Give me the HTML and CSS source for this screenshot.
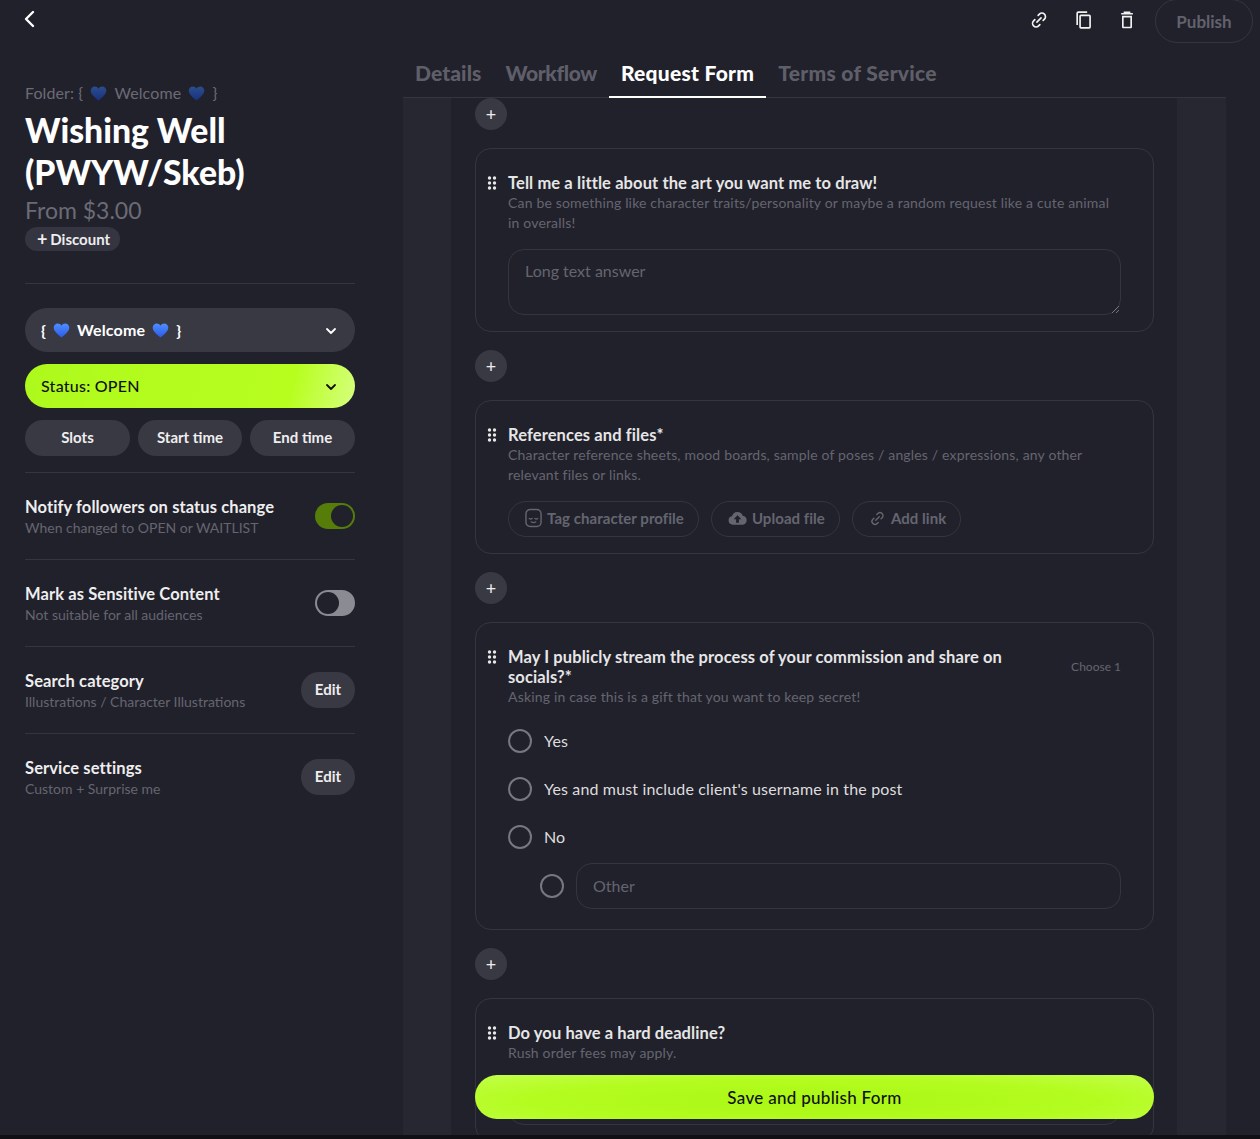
FILE: index.html
```html
<!DOCTYPE html>
<html lang="en">
<head>
  <meta charset="UTF-8" />
  <meta name="viewport" content="width=device-width, initial-scale=1.0" />
  <title>Wishing Well - Request Form</title>
  <link rel="stylesheet" href="styles.css">
</head>
<body>
  <svg class="defs" width="0" height="0">
    <defs>
      <linearGradient id="heartFill" x1="0" y1="0" x2="0" y2="1">
        <stop offset="0" stop-color="#4f8dff" />
        <stop offset="1" stop-color="#2b5be8" />
      </linearGradient>
      <symbol id="heart" viewBox="0 0 24 24">
        <path fill="url(#heartFill)" d="M12 22C6 17 1 13 1 7.8 1 4.4 3.600 2 6.700 2 8.900 2 11 3.200 12 5.200 13 3.200 15.100 2 17.300 2 20.400 2 23 4.400 23 7.800 23 13 18 17 12 22Z" />
      </symbol>
      <symbol id="chev" viewBox="0 0 12 12">
        <path d="M2 4l4 4 4-4" fill="none" stroke="currentColor" stroke-width="1.800" stroke-linecap="round" stroke-linejoin="round" />
      </symbol>
      <symbol id="clip" viewBox="0 0 24 24">
        <path d="M9.500 14.500l5-5M11 6.500l1.500-1.500a4.240 4.240 0 0 1 6 6L17 12.500M13 17.500L11.500 19a4.240 4.240 0 0 1-6-6L7 11.500" fill="none" stroke="currentColor" stroke-width="2" stroke-linecap="round" />
      </symbol>
      <symbol id="dots" viewBox="0 0 10 14">
        <g fill="currentColor">
          <circle cx="2.500" cy="2" r="1.700" /><circle cx="7.500" cy="2" r="1.700" />
          <circle cx="2.500" cy="7" r="1.700" /><circle cx="7.500" cy="7" r="1.700" />
          <circle cx="2.500" cy="12" r="1.700" /><circle cx="7.500" cy="12" r="1.700" />
        </g>
      </symbol>
    </defs>
  </svg>

  <div class="app">
    <aside class="sidebar">
      <a class="back" href="#">
        <svg width="20" height="20" viewBox="0 0 20 20"><path d="M13 3l-7 7 7 7" fill="none" stroke="currentColor" stroke-width="2.400" stroke-linecap="round" stroke-linejoin="round" /></svg>
      </a>

      <div class="folder">Folder: { <svg class="heart"><use href="#heart" /></svg> Welcome <svg class="heart"><use href="#heart" /></svg> }</div>
      <h1>Wishing Well (PWYW/Skeb)</h1>
      <div class="price">From $3.00</div>
      <button class="discount"><span class="plus">+</span>Discount</button>

      <hr class="rule rule-top" />

      <div class="select select-folder">
        <span>{ <svg class="heart"><use href="#heart" /></svg> Welcome <svg class="heart"><use href="#heart" /></svg> }</span>
        <svg class="chev"><use href="#chev" /></svg>
      </div>
      <div class="select select-status">
        <span>Status: OPEN</span>
        <svg class="chev"><use href="#chev" /></svg>
      </div>
      <div class="time-btns">
        <button class="slots">Slots</button>
        <button class="start">Start time</button>
        <button class="end">End time</button>
      </div>

      <hr class="rule rule-mid" />

      <div class="setting">
        <div class="setting-text">
          <div class="setting-title">Notify followers on status change</div>
          <div class="setting-sub">When changed to OPEN or WAITLIST</div>
        </div>
        <span class="toggle on"></span>
      </div>
      <hr class="rule" />
      <div class="setting">
        <div class="setting-text">
          <div class="setting-title">Mark as Sensitive Content</div>
          <div class="setting-sub">Not suitable for all audiences</div>
        </div>
        <span class="toggle"></span>
      </div>
      <hr class="rule" />
      <div class="setting">
        <div class="setting-text">
          <div class="setting-title">Search category</div>
          <div class="setting-sub">Illustrations / Character Illustrations</div>
        </div>
        <button class="edit">Edit</button>
      </div>
      <hr class="rule" />
      <div class="setting">
        <div class="setting-text">
          <div class="setting-title">Service settings</div>
          <div class="setting-sub">Custom + Surprise me</div>
        </div>
        <button class="edit">Edit</button>
      </div>
    </aside>

    <div class="content">
      <div class="topbar">
        <svg class="top-icon"><use href="#clip" /></svg>
        <svg class="top-icon" viewBox="0 0 24 24"><path d="M5 18V4a1.500 1.500 0 0 1 1.500-1.500H17M9.500 6.500h10a1 1 0 0 1 1 1v13a1 1 0 0 1-1 1h-10a1 1 0 0 1-1-1v-13a1 1 0 0 1 1-1z" fill="none" stroke="currentColor" stroke-width="2" /></svg>
        <svg class="top-icon" viewBox="0 0 24 24"><path d="M5 4.500h14M9 4V2.800h6V4M7 8h10v12.500a.5.5 0 0 1-.5.5h-9a.5.5 0 0 1-.5-.5z" fill="none" stroke="currentColor" stroke-width="2" /></svg>
        <button class="publish">Publish</button>
      </div>

      <nav class="tabs">
        <a href="#">Details</a>
        <a href="#" class="tab-tight">Workflow</a>
        <a href="#" class="active">Request Form</a>
        <a href="#" class="tab-wide">Terms of Service</a>
      </nav>

      <div class="form-scroll">
        <main class="form-col">
          <button class="add add-first">+</button>

          <section class="card">
            <svg class="grip"><use href="#dots" /></svg>
            <h3>Tell me a little about the art you want me to draw!</h3>
            <p class="desc">Can be something like character traits/personality or maybe a random request like a cute animal in overalls!</p>
            <div class="long-answer">Long text answer
              <svg class="resizer" width="10" height="10" viewBox="0 0 10 10"><path d="M9 2L2 9M9 6L6 9" stroke="#77777f" stroke-width="1" fill="none" /></svg>
            </div>
          </section>

          <button class="add">+</button>

          <section class="card">
            <svg class="grip"><use href="#dots" /></svg>
            <h3>References and files*</h3>
            <p class="desc">Character reference sheets, mood boards, sample of poses / angles / expressions, any other relevant files or links.</p>
            <div class="file-btns">
              <button class="file-btn">
                <svg width="17" height="20" viewBox="0 0 18 20"><rect x="1" y="1" width="16" height="18" rx="4.500" fill="none" stroke="currentColor" stroke-width="1.500" /><path d="M4.500 10.500c1 .9 2 .9 3 0M10.500 10.500c1 .9 2 .9 3 0M6.500 14c1.600 1.200 3.400 1.200 5 0" fill="none" stroke="currentColor" stroke-width="1.300" stroke-linecap="round" /></svg>
                Tag character profile
              </button>
              <button class="file-btn">
                <svg width="19" height="14" viewBox="0 0 20 14"><path fill="currentColor" d="M5 14a4.500 4.500 0 0 1-.8-8.900A6 6 0 0 1 15.500 4.500 4.800 4.800 0 0 1 15.500 14z" /><path fill="#21212c" d="M10 4l4 4.200h-2.500V12h-3V8.200H6z" /></svg>
                Upload file
              </button>
              <button class="file-btn">
                <svg class="link-icon"><use href="#clip" /></svg>
                Add link
              </button>
            </div>
          </section>

          <button class="add">+</button>

          <section class="card card-choice">
            <svg class="grip"><use href="#dots" /></svg>
            <div class="title-row">
              <h3>May I publicly stream the process of your commission and share on socials?*</h3>
              <span class="choose">Choose 1</span>
            </div>
            <p class="desc">Asking in case this is a gift that you want to keep secret!</p>
            <div class="options">
              <label class="option"><span class="radio"></span>Yes</label>
              <label class="option"><span class="radio"></span>Yes and must include client's username in the post</label>
              <label class="option"><span class="radio"></span>No</label>
              <div class="option-other">
                <span class="radio"></span>
                <div class="other-input">Other</div>
              </div>
            </div>
          </section>

          <button class="add">+</button>

          <section class="card">
            <svg class="grip"><use href="#dots" /></svg>
            <h3>Do you have a hard deadline?</h3>
            <p class="desc">Rush order fees may apply.</p>
            <div class="date-field"></div>
          </section>
        </main>
        <button class="save">Save and publish Form</button>
      </div>
    </div>
  </div>
</body>
</html>
```

FILE: styles.css
```css
* {
  box-sizing: border-box;
}
html, body {
  height: 100%;
}
body {
  margin: 0;
  background: #0f0f14;
  color: #fff;
  font-family: "Lato", "Liberation Sans", sans-serif;
  overflow: hidden;
}
button {
  font-family: inherit;
  border: none;
  cursor: pointer;
}
.defs {
  position: absolute;
}
.app {
  height: 1135px;
  background: #21212c;
  display: grid;
  grid-template-columns: 403px 1fr;
  overflow: hidden;
}

/* Left column */
.sidebar {
  padding: 9px 48px 0 25px;
}
.back {
  display: block;
  height: 20px;
  margin-left: -5px;
  color: #fff;
}
.folder {
  margin-top: 54px;
  height: 20px;
  font-size: 16px;
  letter-spacing: 0.1px;
  line-height: 20px;
  color: #6b6b75;
}
.heart {
  width: 17px;
  height: 17px;
  vertical-align: -3px;
  margin: 0 3px;
}
.folder .heart {
  filter: brightness(0.55);
}
h1 {
  margin: 6px 0 0;
  font-size: 33.7px;
  line-height: 42px;
  font-weight: 900;
  color: #fff;
}
.price {
  margin-top: 1px;
  font-size: 23px;
  line-height: 32px;
  color: #6b6b75;
}
.discount {
  display: flex;
  align-items: center;
  justify-content: center;
  height: 24px;
  width: 95px;
  margin-top: 1px;
  padding: 0 0 0 2px;
  border-radius: 12px;
  background: #353541;
  color: #eee;
  font-size: 15px;
  font-weight: 700;
}
.discount .plus {
  font-size: 18px;
  margin-right: 3px;
}
.rule {
  border: none;
  border-top: 1px solid #35353f;
  margin: 0;
}
.rule-top {
  margin-top: 32px;
}
.rule-mid {
  margin-top: 16px;
}
.select {
  height: 44px;
  border-radius: 22px;
  padding: 0 18px 2px 16px;
  display: flex;
  align-items: center;
  justify-content: space-between;
  font-size: 16px;
  letter-spacing: 0.15px;
}
.select-folder {
  margin-top: 24px;
  background: #393944;
  font-weight: 700;
}
.select-status {
  margin-top: 12px;
  background: linear-gradient(105deg, #aef91c 0%, #b7fe1f 80%, #d6ff7e 100%);
  color: #111;
  font-weight: 500;
  letter-spacing: 0.25px;
}
.chev {
  width: 12px;
  height: 12px;
  margin-top: 3px;
}
.time-btns {
  margin-top: 12px;
  display: flex;
  gap: 8px;
}
.time-btns button {
  height: 36px;
  padding: 0 0 2px;
  border-radius: 18px;
  background: #393944;
  color: #eee;
  font-size: 15px;
  font-weight: 700;
}
.slots { width: 105px; }
.start { width: 104px; }
.end { width: 105px; }
.setting {
  height: 86px;
  display: flex;
  align-items: center;
  justify-content: space-between;
}
.setting-text {
  padding-top: 2px;
}
.setting-title {
  font-size: 16.5px;
  letter-spacing: 0.1px;
  line-height: 22px;
  font-weight: 700;
  color: #eee;
}
.setting-sub {
  font-size: 14px;
  line-height: 20px;
  color: #65656f;
}
.toggle {
  width: 40px;
  height: 26px;
  border-radius: 13px;
  background: #8b8b93;
  padding: 2px;
  display: flex;
}
.toggle::after {
  content: "";
  width: 22px;
  height: 22px;
  border-radius: 50%;
  background: #21212c;
}
.toggle.on {
  background: #567c09;
  justify-content: flex-end;
}
.edit {
  width: 54px;
  height: 36px;
  padding: 0 0 2px;
  border-radius: 18px;
  background: #393944;
  color: #eee;
  font-size: 15px;
  font-weight: 700;
}

/* Right column */
.content {
  min-width: 0;
  display: flex;
  flex-direction: column;
  height: 1135px;
}
.topbar {
  flex: none;
  height: 44px;
  margin-top: -1px;
  padding-right: 7px;
  display: flex;
  justify-content: flex-end;
  align-items: center;
}
.top-icon {
  width: 20px;
  height: 20px;
  color: #f2f2f2;
  margin-right: 24px;
  margin-bottom: 2px;
}
.publish {
  width: 98px;
  height: 44px;
  border-radius: 22px;
  background: transparent;
  border: 1px solid #35353f;
  color: #62626c;
  font-size: 17px;
  font-weight: 700;
  margin-left: -6px;
}
.tabs {
  flex: none;
  height: 55px;
  width: 823px;
  display: flex;
  align-items: flex-end;
  border-bottom: 1px solid #35353f;
}
.tabs a {
  height: 55px;
  padding: 6px 12px 0;
  display: flex;
  align-items: center;
  font-size: 21px;
  letter-spacing: 0.1px;
  font-weight: 900;
  color: #5f5f69;
  text-decoration: none;
}
.tabs a.tab-tight {
  letter-spacing: -0.35px;
}
.tabs a.tab-wide {
  letter-spacing: 0.3px;
}
.tabs a.active {
  color: #fff;
  letter-spacing: 0.25px;
  border-bottom: 2px solid #fff;
  margin-bottom: -1px;
}
.form-scroll {
  position: relative;
  flex: 1;
  width: 823px;
  background: #272732;
  overflow: hidden;
}
.form-col {
  width: 726px;
  height: 100%;
  margin-left: 48px;
  padding: 0 23px 0 24px;
  background: #21212c;
  overflow: hidden;
}
.add {
  display: block;
  width: 32px;
  height: 32px;
  padding: 0;
  margin: 18px 0;
  border-radius: 50%;
  background: #393944;
  color: #eee;
  font-size: 18px;
  line-height: 30px;
}
.add-first {
  margin-top: 0;
}
.card {
  position: relative;
  border: 1px solid #35353f;
  border-radius: 16px;
  padding: 24px 32px 16px;
}
.card-choice {
  padding-bottom: 20px;
}
.grip {
  position: absolute;
  left: 11px;
  top: 27px;
  width: 10px;
  height: 14px;
  color: #e8e8e8;
}
h3 {
  margin: 0;
  font-size: 16.5px;
  letter-spacing: 0.1px;
  line-height: 20px;
  font-weight: 700;
  color: #e6e6e6;
}
.desc {
  margin: 0;
  font-size: 14px;
  letter-spacing: 0.17px;
  line-height: 20px;
  color: #65656f;
}
.long-answer {
  position: relative;
  margin-top: 16px;
  height: 66px;
  padding: 11px 16px;
  border: 1px solid #35353f;
  border-radius: 16px;
  font-size: 16px;
  line-height: 20px;
  color: #65656f;
}
.resizer {
  position: absolute;
  right: 0;
  bottom: 0;
}
.file-btns {
  margin-top: 16px;
  display: flex;
  gap: 12px;
}
.file-btn {
  height: 36px;
  padding: 0 14px 2px 16px;
  display: flex;
  align-items: center;
  gap: 5px;
  border-radius: 18px;
  background: transparent;
  border: 1px solid #35353f;
  color: #65656f;
  font-size: 15px;
  letter-spacing: 0.05px;
  font-weight: 700;
}
.link-icon {
  width: 17px;
  height: 17px;
}
.title-row {
  display: flex;
  align-items: flex-start;
  justify-content: space-between;
}
.title-row h3 {
  width: 510px;
}
.choose {
  font-size: 12px;
  line-height: 20px;
  margin-top: 10px;
  color: #65656f;
}
.options {
  margin-top: 9px;
}
.option {
  height: 48px;
  display: flex;
  align-items: center;
  gap: 12px;
  font-size: 16px;
  letter-spacing: 0.15px;
  color: #ddd;
}
.radio {
  flex: none;
  width: 24px;
  height: 24px;
  border-radius: 50%;
  border: 2px solid #77777f;
}
.option .radio {
  margin-top: 2px;
}
.option-other {
  margin-top: 3px;
  padding-left: 32px;
  display: flex;
  align-items: center;
  gap: 12px;
}
.other-input {
  flex: 1;
  height: 46px;
  padding: 0 16px 2px;
  display: flex;
  align-items: center;
  border: 1px solid #35353f;
  border-radius: 16px;
  font-size: 16px;
  color: #65656f;
}
.date-field {
  margin-top: 16px;
  height: 46px;
  border: 1px solid #35353f;
  border-radius: 16px;
}
.save {
  position: absolute;
  left: 72px;
  top: 977px;
  width: 679px;
  height: 44px;
  border-radius: 22px;
  background: radial-gradient(ellipse at 50% 60%, #aaf714 0%, #b4fc20 60%, #c2ff4a 100%);
  color: #111;
  font-size: 17px;
  letter-spacing: 0.3px;
  font-weight: 500;
}
```
